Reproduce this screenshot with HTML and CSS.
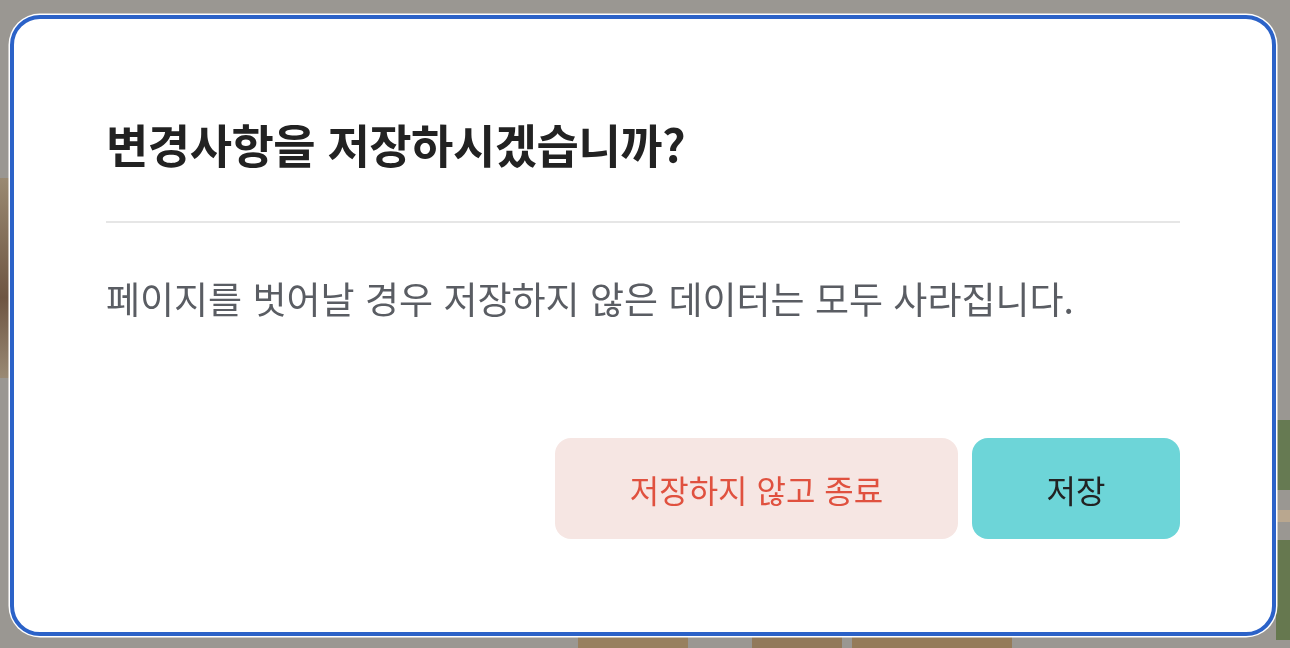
FILE: index.html
```html
<!DOCTYPE html>
<html lang="ko">

<head>
    <meta charset="UTF-8">
    <meta name="viewport" content="width=device-width, initial-scale=1.0">
    <title>변경사항 저장</title>
    <link rel="stylesheet" href="styles.css">
</head>

<body>

    <!-- dimmed page behind the dialog -->
    <div class="backdrop">
        <div class="blob blob-left"></div>
        <div class="blob blob-plant-1"></div>
        <div class="blob blob-plant-2"></div>
        <div class="blob blob-shelf"></div>
        <div class="blob blob-wood-1"></div>
        <div class="blob blob-wood-2"></div>
        <div class="blob blob-wood-3"></div>
    </div>

    <div class="modal-wrap">
        <div class="modal">
            <h2 class="modal-title">변경사항을 저장하시겠습니까?</h2>
            <hr class="modal-divider">
            <p class="modal-text">페이지를 벗어날 경우 저장하지 않은 데이터는 모두 사라집니다.</p>

            <div class="modal-actions">
                <button class="btn btn-discard">저장하지 않고 종료</button>
                <button class="btn btn-save">저장</button>
            </div>
        </div>
    </div>

</body>

</html>
```

FILE: styles.css
```css
body {
    font-family: "Noto Sans CJK KR", "Noto Sans", sans-serif;
    background-color: #9a9792;
    margin: 0;
    height: 648px;
    overflow: hidden;
}

/* photo bits peeking out from under the overlay */
.backdrop {
    position: fixed;
    inset: 0;
}

.blob {
    position: absolute;
}

.blob-left {
    left: 0;
    top: 178px;
    width: 12px;
    height: 200px;
    background: linear-gradient(#9a8a72, #6e5542 60%, #9a8a74);
}

.blob-plant-1 {
    right: 0;
    top: 420px;
    width: 14px;
    height: 70px;
    background: #667a52;
}

.blob-plant-2 {
    right: 0;
    top: 540px;
    width: 14px;
    height: 100px;
    background: #66784f;
}

.blob-shelf {
    right: 0;
    top: 510px;
    width: 14px;
    height: 12px;
    background: #b9a78f;
}

.blob-wood-1 {
    left: 578px;
    bottom: 0;
    width: 110px;
    height: 14px;
    background: #98805f;
}

.blob-wood-2 {
    left: 752px;
    bottom: 0;
    width: 90px;
    height: 14px;
    background: #92795a;
}

.blob-wood-3 {
    left: 852px;
    bottom: 0;
    width: 160px;
    height: 14px;
    background: #957b59;
}

.modal-wrap {
    position: relative;
    padding: 15px 14px 12px 10px;
    height: 648px;
    box-sizing: border-box;
    display: flex;
}

.modal {
    flex: 1;
    background-color: #fff;
    border: 4px solid #2b62c8;
    border-radius: 30px;
    box-shadow: 0 0 0 1.5px #fff;
    padding: 94px 92px 93px;
    display: flex;
    flex-direction: column;
}

.modal-title {
    margin: 0;
    font-size: 46px;
    font-weight: 700;
    line-height: 60px;
    color: #222;
    letter-spacing: -0.5px;
}

.modal-divider {
    border: none;
    border-top: 2px solid #e6e6e6;
    margin: 48px 0 0;
}

.modal-text {
    margin: 50px 0 0;
    font-size: 37px;
    line-height: 50px;
    color: #5a5d63;
}

.modal-actions {
    margin-top: auto;
    display: flex;
    justify-content: flex-end;
    gap: 14px;
}

.btn {
    font-family: inherit;
    border: none;
    border-radius: 16px;
    height: 101px;
    font-size: 32px;
    font-weight: 400;
    cursor: pointer;
}

.btn-discard {
    width: 403px;
    background-color: #f6e6e3;
    color: #e0513f;
}

.btn-save {
    width: 208px;
    background-color: #6dd5d8;
    color: #222;
}
```
